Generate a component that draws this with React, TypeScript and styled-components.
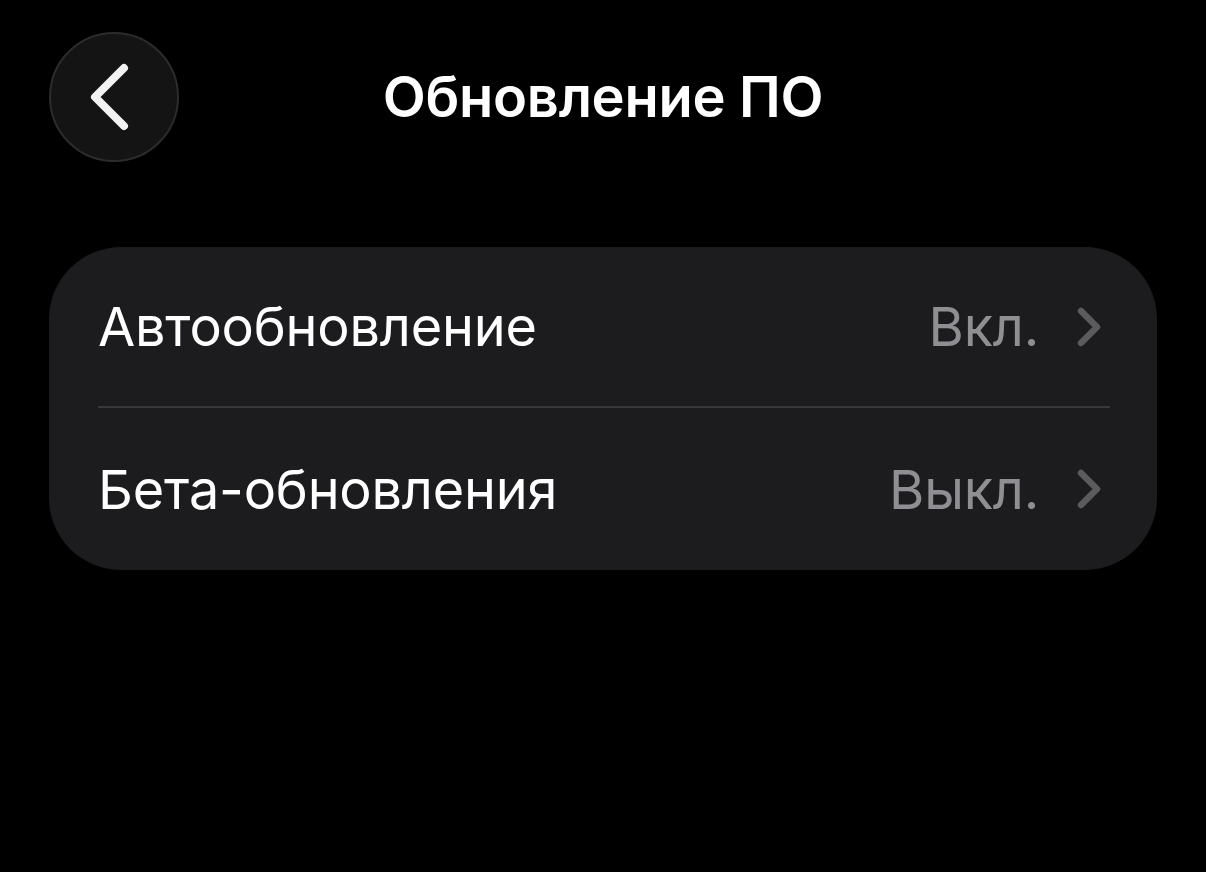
import React from "react";
import styled, { createGlobalStyle } from "styled-components";

const GlobalStyle = createGlobalStyle`
  html, body {
    margin: 0;
    padding: 0;
    background: #000;
  }
  body {
    font-family: Inter, "Noto Sans", "Liberation Sans", sans-serif;
    -webkit-font-smoothing: antialiased;
  }
`;

const Screen = styled.div`
  width: 1206px;
  height: 872px;
  background: #000;
  display: flex;
  flex-direction: column;
  padding: 32px 49px 0 49px;
  box-sizing: border-box;
`;

const Header = styled.div`
  display: grid;
  grid-template-columns: 130px 1fr 130px;
  align-items: center;
  height: 130px;
`;

const BackButton = styled.button`
  width: 130px;
  height: 130px;
  border-radius: 50%;
  background: #141414;
  border: 2px solid #2c2c2c;
  box-sizing: border-box;
  display: flex;
  align-items: center;
  justify-content: center;
  padding: 0 8px 0 0;
  cursor: pointer;
`;

const Title = styled.h1`
  margin: 0;
  text-align: center;
  color: #fff;
  font-size: 56px;
  font-weight: 600;
  letter-spacing: -0.3px;
`;

const Card = styled.div`
  margin-top: 85px;
  background: #1c1c1e;
  border-radius: 72px;
  display: flex;
  flex-direction: column;
  padding: 0 54px 0 49px;
`;

const Row = styled.div<{ $height: number }>`
  height: ${({ $height }) => $height}px;
  display: flex;
  align-items: center;
  justify-content: space-between;
`;

const Separator = styled.div`
  height: 2px;
  background: #38383a;
  margin-right: -7px;
`;

const Label = styled.span`
  color: #fff;
  font-size: 54px;
  font-weight: 400;
  letter-spacing: -0.2px;
`;

const Trailing = styled.div`
  display: flex;
  align-items: center;
  gap: 38px;
`;

const Value = styled.span`
  color: #8e8e93;
  font-size: 54px;
  font-weight: 400;
  letter-spacing: -0.2px;
`;

const Chevron = () => (
  <svg width="26" height="40" viewBox="0 0 26 40" fill="none">
    <path
      d="M4 4 L20 20 L4 36"
      stroke="#5b5b5f"
      strokeWidth="6.5"
      strokeLinecap="round"
      strokeLinejoin="round"
    />
  </svg>
);

const BackIcon = () => (
  <svg width="46" height="68" viewBox="0 0 46 68" fill="none">
    <path
      d="M37 5 L8 34 L37 63"
      stroke="#f2f2f2"
      strokeWidth="8"
      strokeLinecap="round"
      strokeLinejoin="round"
    />
  </svg>
);

const settings = [
  { label: "Автообновление", value: "Вкл.", height: 159 },
  { label: "Бета-обновления", value: "Выкл.", height: 162 },
];

export default function App() {
  return (
    <>
      <GlobalStyle />
      <Screen>
        <Header>
          <BackButton aria-label="Назад">
            <BackIcon />
          </BackButton>
          <Title>Обновление ПО</Title>
          <div />
        </Header>
        <Card>
          {settings.map((item, i) => (
            <React.Fragment key={item.label}>
              {i > 0 && <Separator />}
              <Row $height={item.height}>
                <Label>{item.label}</Label>
                <Trailing>
                  <Value>{item.value}</Value>
                  <Chevron />
                </Trailing>
              </Row>
            </React.Fragment>
          ))}
        </Card>
      </Screen>
    </>
  );
}
